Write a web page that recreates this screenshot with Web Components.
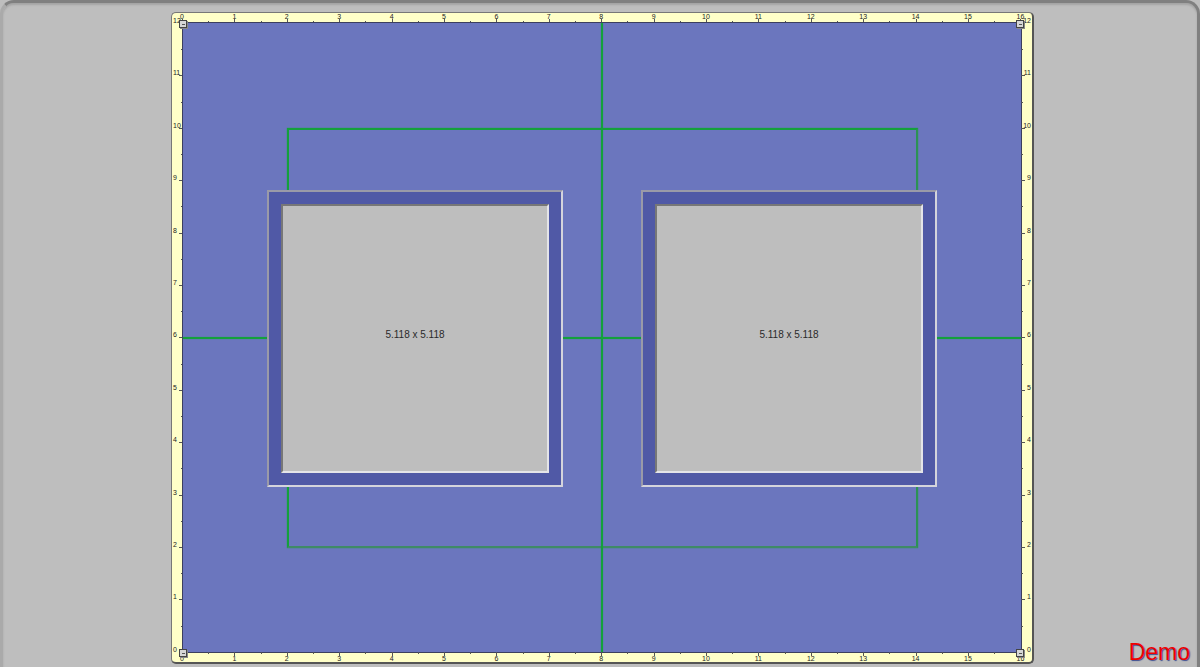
<!DOCTYPE html>
<html>
<head>
<meta charset="utf-8">
<title>Mat layout</title>
<style>
  html, body { margin: 0; padding: 0; background: #bebebe; }
  body { width: 1200px; height: 667px; overflow: hidden; font-family: "Liberation Sans", Arial, sans-serif; }
</style>
</head>
<body>
<mat-desktop>
  <mat-frame>
    <mat-opening slot="board" style="left:84px"></mat-opening>
    <mat-opening slot="board" style="left:458px"></mat-opening>
  </mat-frame>
</mat-desktop>

<script>
const UNIT = 52.4;

class MatDesktop extends HTMLElement {
  constructor() {
    super();
    this.attachShadow({ mode: 'open' });
    this.shadowRoot.innerHTML = `
      <style>
        :host {
          display: flex;
          justify-content: center;
          box-sizing: border-box;
          position: relative;
          width: 1200px;
          height: 667px;
          padding: 12px 0 0 5px;
          background: #bebebe;
          overflow: hidden;
        }
        .edge {
          position: absolute;
          inset: 0 0 -20px 0;
          border: 3px solid #808080;
          border-left-color: #aaa;
          border-radius: 14px;
          box-shadow: inset 0 2px 2px #a4a4a4;
          pointer-events: none;
        }
        .demo {
          position: absolute;
          right: 10px;
          bottom: 1px;
          font-size: 23px;
          line-height: 28px;
          color: #f00000;
          text-shadow: 1px 1px 1px #3c4c90;
        }
      </style>
      <div class="edge"></div>
      <slot></slot>
      <div class="demo">Demo</div>
    `;
  }
}

// Regla: marcas cada media unidad, numeros cada unidad
class MatRuler extends HTMLElement {
  constructor() {
    super();
    this.attachShadow({ mode: 'open' });
  }

  connectedCallback() {
    const side = this.getAttribute('side');
    const horizontal = side === 'top' || side === 'bottom';
    const count = horizontal ? 16 : 12;
    let marks = '';
    for (let i = 0; i <= count * 2; i++) {
      const at = (i / 2) * UNIT;
      const major = i % 2 === 0;
      const pos = horizontal ? `left:${at}px` : `top:${(count - i / 2) * UNIT}px`;
      marks += `<i class="tick ${major ? 'major' : ''}" style="${pos}"></i>`;
      if (major) marks += `<span class="num" style="${pos}">${i / 2}</span>`;
    }
    this.shadowRoot.innerHTML = `
      <style>
        :host { display: block; position: relative; font-size: 7px; color: #222; line-height: 7px; }
        .tick { position: absolute; background: #555; }
        .num { position: absolute; }
        :host([side=top]) .tick, :host([side=bottom]) .tick { width: 1px; height: 2px; margin-left: -1px; }
        :host([side=top]) .tick.major, :host([side=bottom]) .tick.major { height: 4px; }
        :host([side=top]) .tick { bottom: 0; }
        :host([side=bottom]) .tick { top: 0; }
        :host([side=top]) .num { top: 0; transform: translateX(-50%); margin-left: -1px; }
        :host([side=bottom]) .num { bottom: 0; transform: translateX(-50%); margin-left: -1px; }
        :host([side=left]) .tick, :host([side=right]) .tick { height: 1px; width: 2px; }
        :host([side=left]) .tick.major, :host([side=right]) .tick.major { width: 4px; }
        :host([side=left]) .tick { right: 0; }
        :host([side=right]) .tick { left: 0; }
        :host([side=left]) .num { left: 1px; transform: translateY(-50%); margin-top: -3px; }
        :host([side=right]) .num { right: 1px; transform: translateY(-50%); margin-top: -3px; }
      </style>
      ${marks}
    `;
  }
}

class MatFrame extends HTMLElement {
  constructor() {
    super();
    this.attachShadow({ mode: 'open' });
    this.shadowRoot.innerHTML = `
      <style>
        :host {
          display: grid;
          grid-template-columns: 11px 838px 11px;
          grid-template-rows: 10px 629px 10px;
          width: 860px;
          height: 649px;
          background: #ffffc8;
          border: 1px solid #777;
          border-right: 2px solid #555;
          border-bottom: 2px solid #555;
          border-radius: 5px;
        }
        mat-ruler[side=top] { grid-area: 1 / 2; }
        mat-ruler[side=left] { grid-area: 2 / 1; }
        mat-ruler[side=right] { grid-area: 2 / 3; }
        mat-ruler[side=bottom] { grid-area: 3 / 2; }
        .board {
          grid-area: 2 / 2;
          position: relative;
          background: #6b76be;
          box-shadow: 0 0 0 1px #3c3f5e;
        }
        .v, .h, .rect { position: absolute; }
        .v { left: 418px; top: 0; bottom: 0; width: 2px; background: #14a03c; box-shadow: 0 0 1px #14a03c; }
        .h { left: 0; right: 0; top: 314px; height: 2px; background: #14a03c; box-shadow: 0 0 1px #14a03c; }
        .rect {
          left: 104px; top: 105px;
          width: 627px; height: 416px;
          border: 2px solid #14a03c;
          border-bottom-color: #3f8a66;
          border-right-color: #2c9255;
          box-shadow: 0 0 1px #14a03c;
        }
        .handle {
          position: absolute;
          box-sizing: border-box;
          width: 8px; height: 8px;
          background: linear-gradient(#555, #555) center / 3px 1px no-repeat, #d6d6d6;
          border: 1px solid #444;
          box-shadow: 1px 1px 0 #888;
          z-index: 2;
        }
      </style>
      <mat-ruler side="top"></mat-ruler>
      <mat-ruler side="left"></mat-ruler>
      <div class="board">
        <div class="h"></div>
        <div class="rect"></div>
        <div class="v"></div>
        <slot name="board"></slot>
        <div class="handle" style="left:-4px;top:-3px"></div>
        <div class="handle" style="right:-3px;top:-3px"></div>
        <div class="handle" style="left:-4px;bottom:-5px"></div>
        <div class="handle" style="right:-3px;bottom:-5px"></div>
      </div>
      <mat-ruler side="right"></mat-ruler>
      <mat-ruler side="bottom"></mat-ruler>
    `;
  }
}

// Ventana del passepartout con su medida
class MatOpening extends HTMLElement {
  constructor() {
    super();
    this.attachShadow({ mode: 'open' });
    this.shadowRoot.innerHTML = `
      <style>
        :host {
          position: absolute;
          top: 167px;
          box-sizing: border-box;
          width: 296px;
          height: 297px;
          padding: 12px;
          background: #5059a6;
          border: 2px solid;
          border-color: #9a9aa8 #d4d4dc #d4d4dc #9a9aa8;
          display: flex;
        }
        .cut {
          flex: 1;
          display: flex;
          align-items: center;
          justify-content: center;
          box-sizing: border-box;
          padding-bottom: 9px;
          background: #bebebe;
          border: 2px solid;
          border-color: #777 #e4e4e8 #e4e4e8 #777;
          font-size: 10px;
          color: #2a2a2a;
        }
      </style>
      <div class="cut">5.118 x 5.118</div>
    `;
  }
}

customElements.define('mat-desktop', MatDesktop);
customElements.define('mat-ruler', MatRuler);
customElements.define('mat-frame', MatFrame);
customElements.define('mat-opening', MatOpening);
</script>
</body>
</html>
